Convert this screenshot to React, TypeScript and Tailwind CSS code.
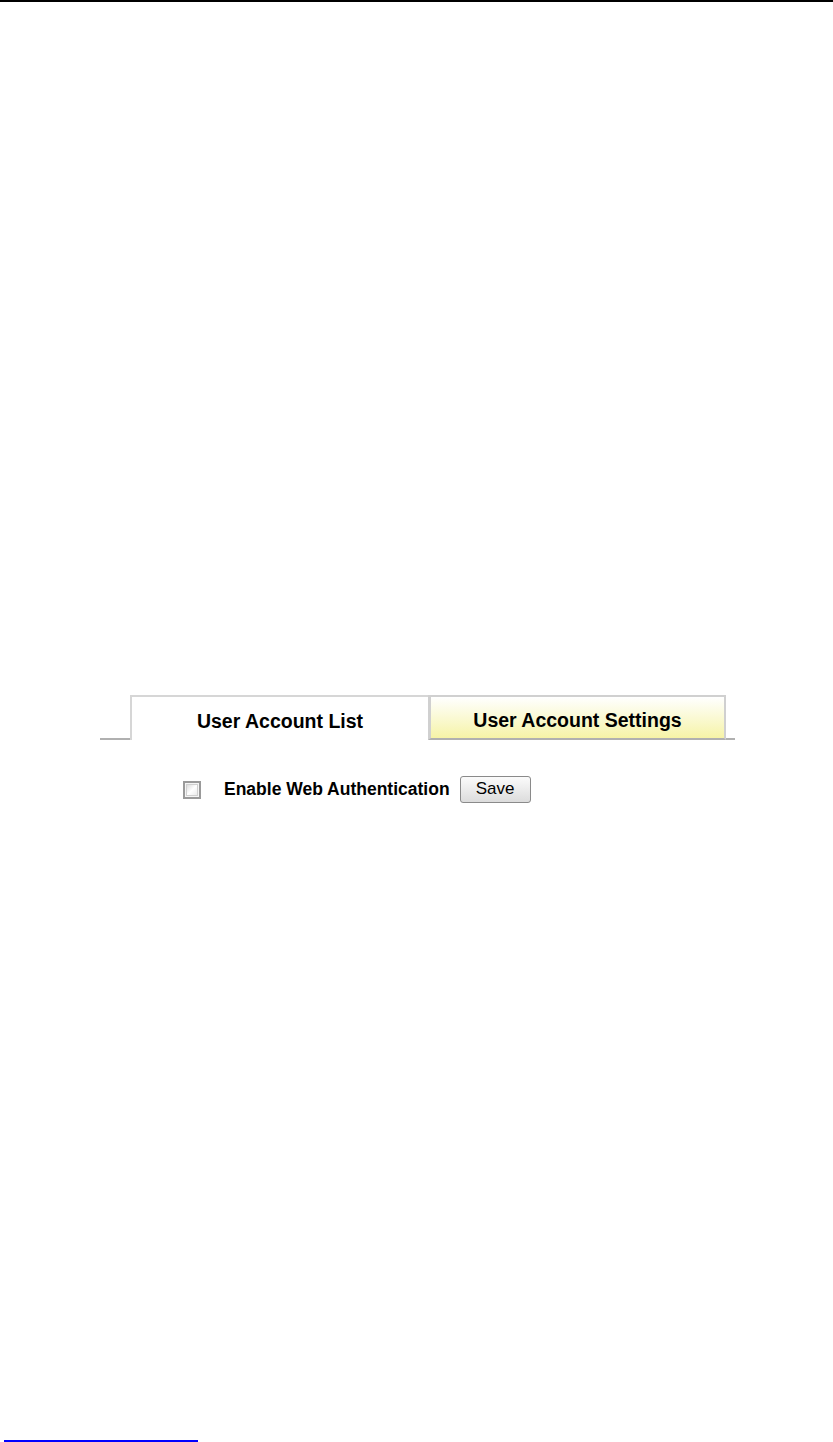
import React from "react";

export default function App() {
  return (
    <div
      className="w-[833px] h-[1442px] bg-white flex flex-col text-black"
      style={{ fontFamily: '"Liberation Sans", Arial, sans-serif' }}
    >
      <div className="h-[2px] w-full bg-black" />
      <div className="pt-[693px]">
        <div className="flex items-end ml-[100px] w-[635px]">
          <div className="w-[30px] border-b-2 border-[#b0b0b0]" />
          <div className="w-[298px] h-[45px] border-l-2 border-t-2 border-[#d6d6d6] flex items-center justify-center pt-[6px] bg-white">
            <span className="text-[19.5px] font-bold leading-none">User Account List</span>
          </div>
          <div className="w-[298px] h-[45px] border-l-[3px] border-t-2 border-r-2 border-[#d0d0d0] border-b-2 border-b-[#b0b0b0] flex items-center justify-center pt-[6px] bg-gradient-to-b from-white to-[#f6f3a6]">
            <span className="text-[19.5px] font-bold leading-none">User Account Settings</span>
          </div>
          <div className="w-[9px] border-b-2 border-[#b0b0b0]" />
        </div>
        <div className="flex items-center mt-[36px] ml-[183px]">
          <div className="w-[18px] h-[18px] border-2 border-[#9a9a9a] p-[1px] bg-[#f4f4f4]">
            <div className="w-full h-full border border-[#d0d0d0] bg-gradient-to-br from-[#dcdcdc] via-white to-[#ebebeb]" />
          </div>
          <span className="ml-[23px] text-[17.5px] font-bold leading-none">Enable Web Authentication</span>
          <button className="ml-[10px] w-[71px] h-[27px] rounded-[3px] border border-[#8a8a8a] bg-gradient-to-b from-[#fbfbfb] to-[#dcdcdc] text-[17px] leading-none flex items-center justify-center pb-[2px]">
            Save
          </button>
        </div>
      </div>
      <div className="mt-auto ml-[4px] w-[194px] h-[2px] bg-[#0000ff]" />
    </div>
  );
}
